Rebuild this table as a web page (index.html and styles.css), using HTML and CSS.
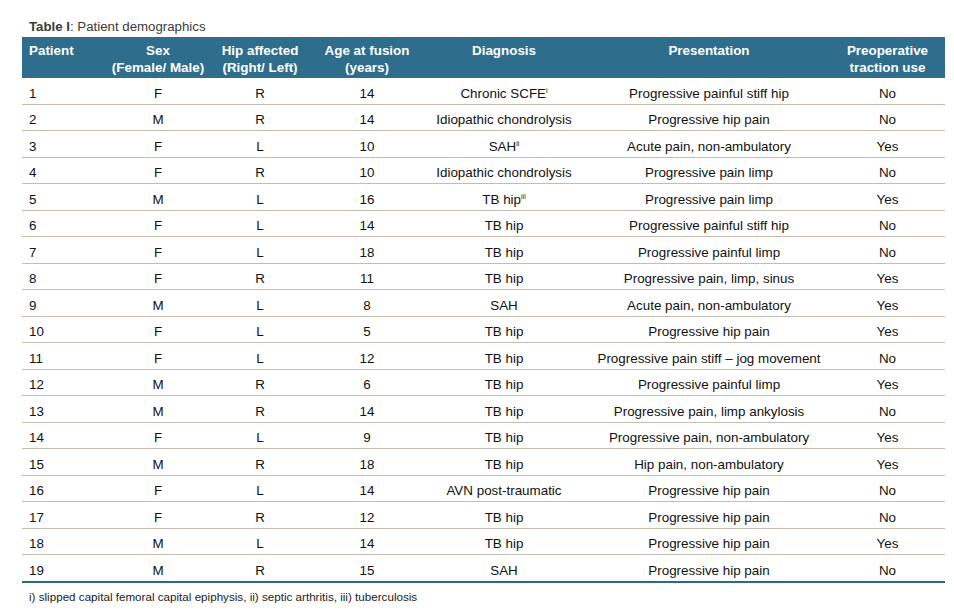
FILE: index.html
```html
<!DOCTYPE html>
<html>
<head>
<meta charset="utf-8">
<link rel="stylesheet" href="styles.css">
</head>
<body>
<div class="wrap">
  <div class="caption"><b>Table I</b>: Patient demographics</div>
  <table class="demo">
    <colgroup>
      <col class="c1"><col class="c2"><col class="c3"><col class="c4"><col class="c5"><col class="c6"><col class="c7">
    </colgroup>
    <thead>
      <tr>
        <th class="left">Patient</th>
        <th>Sex<br>(Female/ Male)</th>
        <th>Hip affected<br>(Right/ Left)</th>
        <th>Age at fusion<br>(years)</th>
        <th>Diagnosis</th>
        <th>Presentation</th>
        <th>Preoperative<br>traction use</th>
      </tr>
    </thead>
    <tbody>
      <tr><td class="left">1</td><td>F</td><td>R</td><td>14</td><td>Chronic SCFE<sup>i</sup></td><td>Progressive painful stiff hip</td><td>No</td></tr>
      <tr><td class="left">2</td><td>M</td><td>R</td><td>14</td><td>Idiopathic chondrolysis</td><td>Progressive hip pain</td><td>No</td></tr>
      <tr><td class="left">3</td><td>F</td><td>L</td><td>10</td><td>SAH<sup>ii</sup></td><td>Acute pain, non-ambulatory</td><td>Yes</td></tr>
      <tr><td class="left">4</td><td>F</td><td>R</td><td>10</td><td>Idiopathic chondrolysis</td><td>Progressive pain limp</td><td>No</td></tr>
      <tr><td class="left">5</td><td>M</td><td>L</td><td>16</td><td>TB hip<sup>iii</sup></td><td>Progressive pain limp</td><td>Yes</td></tr>
      <tr><td class="left">6</td><td>F</td><td>L</td><td>14</td><td>TB hip</td><td>Progressive painful stiff hip</td><td>No</td></tr>
      <tr><td class="left">7</td><td>F</td><td>L</td><td>18</td><td>TB hip</td><td>Progressive painful limp</td><td>No</td></tr>
      <tr><td class="left">8</td><td>F</td><td>R</td><td>11</td><td>TB hip</td><td>Progressive pain, limp, sinus</td><td>Yes</td></tr>
      <tr><td class="left">9</td><td>M</td><td>L</td><td>8</td><td>SAH</td><td>Acute pain, non-ambulatory</td><td>Yes</td></tr>
      <tr><td class="left">10</td><td>F</td><td>L</td><td>5</td><td>TB hip</td><td>Progressive hip pain</td><td>Yes</td></tr>
      <tr><td class="left">11</td><td>F</td><td>L</td><td>12</td><td>TB hip</td><td>Progressive pain stiff – jog movement</td><td>No</td></tr>
      <tr><td class="left">12</td><td>M</td><td>R</td><td>6</td><td>TB hip</td><td>Progressive painful limp</td><td>Yes</td></tr>
      <tr><td class="left">13</td><td>M</td><td>R</td><td>14</td><td>TB hip</td><td>Progressive pain, limp ankylosis</td><td>No</td></tr>
      <tr><td class="left">14</td><td>F</td><td>L</td><td>9</td><td>TB hip</td><td>Progressive pain, non-ambulatory</td><td>Yes</td></tr>
      <tr><td class="left">15</td><td>M</td><td>R</td><td>18</td><td>TB hip</td><td>Hip pain, non-ambulatory</td><td>Yes</td></tr>
      <tr><td class="left">16</td><td>F</td><td>L</td><td>14</td><td>AVN post-traumatic</td><td>Progressive hip pain</td><td>No</td></tr>
      <tr><td class="left">17</td><td>F</td><td>R</td><td>12</td><td>TB hip</td><td>Progressive hip pain</td><td>No</td></tr>
      <tr><td class="left">18</td><td>M</td><td>L</td><td>14</td><td>TB hip</td><td>Progressive hip pain</td><td>Yes</td></tr>
      <tr class="last"><td class="left">19</td><td>M</td><td>R</td><td>15</td><td>SAH</td><td>Progressive hip pain</td><td>No</td></tr>
    </tbody>
  </table>
  <div class="foot">i) slipped capital femoral capital epiphysis, ii) septic arthritis, iii) tuberculosis</div>
</div>
</body>
</html>
```
FILE: styles.css
```css
html, body {
  margin: 0;
  padding: 0;
  background: #ffffff;
}
body {
  font-family: "Liberation Sans", Arial, sans-serif;
  color: #111111;
}
.wrap {
  padding: 18px 9px 0 22px;
  width: 923px;
}
.caption {
  font-size: 13.25px;
  line-height: 17px;
  color: #3a3a3a;
  padding-left: 7px;
  height: 19px;
}
.caption b {
  font-weight: bold;
}
.demo {
  width: 923px;
  border-collapse: collapse;
  table-layout: fixed;
  font-size: 13.4px;
}
.c1 { width: 88px; }
.c2 { width: 96px; }
.c3 { width: 108px; }
.c4 { width: 106px; }
.c5 { width: 168px; }
.c6 { width: 242px; }
.c7 { width: 115px; }
.demo thead th {
  background: #2f6d8c;
  color: #ffffff;
  font-weight: bold;
  text-align: center;
  vertical-align: top;
  line-height: 17px;
  padding: 4.5px 0 2.5px 0;
  height: 34px;
}
.demo th.left, .demo td.left {
  text-align: left;
  padding-left: 7px;
}
.demo tbody td {
  text-align: center;
  vertical-align: top;
  padding: 7.5px 0 2px 0;
  line-height: 16px;
  border-bottom: 1px solid #c4bcac;
}
.demo tbody tr.last td {
  border-bottom: 2px solid #2f6a80;
}
.demo sup {
  font-size: 7px;
  line-height: 0;
  vertical-align: 5px;
}
.foot {
  font-size: 11.65px;
  line-height: 14px;
  color: #222222;
  padding: 7px 0 0 7px;
}
```
